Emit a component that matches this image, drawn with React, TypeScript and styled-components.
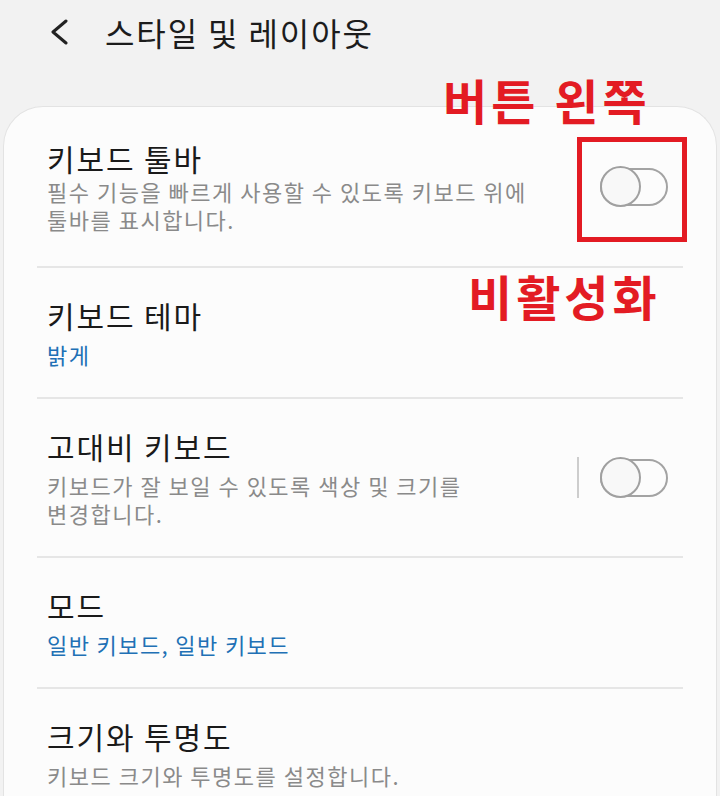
import React from 'react';
import styled, { createGlobalStyle } from 'styled-components';

const GlobalStyle = createGlobalStyle`
  html, body {
    margin: 0;
    padding: 0;
    background: #f2f2f2;
  }
  body {
    font-family: "Noto Sans CJK KR", "Noto Sans", sans-serif;
    -webkit-font-smoothing: antialiased;
  }
`;

type Setting = {
  title: string;
  desc?: string[];
  value?: string;
  toggle?: boolean;
  divider?: boolean;
};

const SETTINGS: Setting[] = [
  {
    title: '키보드 툴바',
    desc: ['필수 기능을 빠르게 사용할 수 있도록 키보드 위에', '툴바를 표시합니다.'],
    toggle: true
  },
  { title: '키보드 테마', value: '밝게' },
  {
    title: '고대비 키보드',
    desc: ['키보드가 잘 보일 수 있도록 색상 및 크기를', '변경합니다.'],
    toggle: true,
    divider: true
  },
  { title: '모드', value: '일반 키보드, 일반 키보드' },
  { title: '크기와 투명도', desc: ['키보드 크기와 투명도를 설정합니다.'] }
];

const Toggle = () => (
  <Switch>
    <Track />
    <Thumb />
  </Switch>
);

const App = () => {
  return (
    <Page>
      <GlobalStyle />
      <Header>
        <BackButton aria-label="back">
          <svg width="20" height="26" viewBox="0 0 20 26" fill="none">
            <path d="M17 2 L4 13 L17 24" stroke="#222" strokeWidth="3" strokeLinecap="round" strokeLinejoin="round" />
          </svg>
        </BackButton>
        <HeaderTitle>스타일 및 레이아웃</HeaderTitle>
      </Header>

      <Card>
        {SETTINGS.map((item, key) => (
          <Row key={key} $first={key === 0} $last={key === SETTINGS.length - 1}>
            <RowText>
              <Title $first={key === 0}>{item.title}</Title>
              {item.value && <Value>{item.value}</Value>}
              {item.desc && (
                <Desc>
                  {item.desc.map((line, i) => (
                    <span key={i}>{line}</span>
                  ))}
                </Desc>
              )}
            </RowText>
            {item.divider && <VLine />}
            {item.toggle && <Toggle />}
          </Row>
        ))}
      </Card>

      <Note $top={75} $left={443}>버튼 왼쪽</Note>
      <Note $top={271} $left={468}>비활성화</Note>
      <Highlight />
    </Page>
  );
};

export default App;

const Page = styled.div`
  position: relative;
  width: 720px;
  height: 796px;
  overflow: hidden;
  background: #f2f2f2;
`;

const Header = styled.header`
  height: 64px;
  display: flex;
  align-items: center;
  padding-left: 49px;
  gap: 36px;
`;

const BackButton = styled.button`
  border: 0;
  padding: 0;
  background: none;
  display: flex;
  align-items: center;
`;

const HeaderTitle = styled.h1`
  margin: 0;
  font-size: 32px;
  font-weight: 400;
  line-height: 40px;
  color: #1c1c1c;
  letter-spacing: 1.9px;
`;

const Card = styled.section`
  margin: 42px 3px 0;
  background: #fcfcfc;
  border: 1px solid #e3e3e3;
  border-bottom: 0;
  border-radius: 40px 40px 0 0;
  height: 720px;
`;

const Row = styled.article<{ $first?: boolean; $last?: boolean }>`
  margin: 0 33px;
  padding: ${({ $first }) => ($first ? '33px 15px 33px 10px' : '29px 15px 29px 10px')};
  display: flex;
  align-items: center;
  border-bottom: ${({ $last }) => ($last ? '0' : '2px solid #e6e6e6')};
`;

const RowText = styled.div`
  flex: 1;
  display: flex;
  flex-direction: column;
`;

const Title = styled.div<{ $first?: boolean }>`
  font-size: 30px;
  line-height: 36px;
  color: #1a1a1a;
  letter-spacing: 1.9px;
  margin-bottom: ${({ $first }) => ($first ? '1px' : '7px')};
`;

const Value = styled.div`
  font-size: 22px;
  line-height: 28px;
  color: #2170b5;
  letter-spacing: 1.4px;
`;

const Desc = styled.div`
  display: flex;
  flex-direction: column;
  font-size: 22px;
  line-height: 28px;
  color: #8a8a8a;
  letter-spacing: 1.5px;
`;

const VLine = styled.div`
  width: 2px;
  height: 41px;
  background: #cdcdcd;
  margin-right: 21px;
`;

const Switch = styled.div`
  position: relative;
  width: 68px;
  height: 42px;
  flex-shrink: 0;
`;

const Track = styled.div`
  position: absolute;
  left: 0;
  top: 2px;
  width: 68px;
  height: 38px;
  box-sizing: border-box;
  border: 2px solid #a3a3a3;
  border-radius: 19px;
`;

const Thumb = styled.div`
  position: absolute;
  left: 0;
  top: 0;
  width: 41px;
  height: 41px;
  box-sizing: border-box;
  border: 2px solid #a0a0a0;
  border-radius: 50%;
  background: #f8f8f8;
`;

const Note = styled.div<{ $top: number; $left: number }>`
  position: absolute;
  top: ${({ $top }) => $top}px;
  left: ${({ $left }) => $left}px;
  font-size: 48px;
  line-height: 48px;
  font-weight: 700;
  color: #e31b23;
  white-space: nowrap;
  letter-spacing: 4px;
`;

const Highlight = styled.div`
  position: absolute;
  left: 577px;
  top: 137px;
  width: 110px;
  height: 105px;
  box-sizing: border-box;
  border: 5px solid #e31b23;
`;
